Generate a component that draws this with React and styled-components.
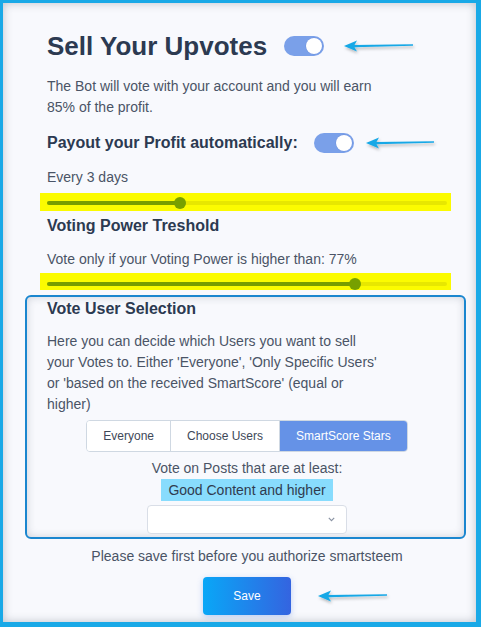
import React from "react";
import styled, { createGlobalStyle } from "styled-components";

const Global = createGlobalStyle`
  html, body { margin: 0; padding: 0; background: #ffffff; }
  body { font-family: "Liberation Sans", Arial, sans-serif; }
  * { box-sizing: border-box; }
`;

const Frame = styled.div`
  width: 481px;
  height: 627px;
  border-style: solid;
  border-color: #19a9e7;
  border-width: 3px 5px 5px 3px;
  background: #f8f9fd;
  box-shadow: inset 0 0 10px rgba(40, 50, 70, 0.28);
  padding: 28px 0 0 44px;
  overflow: hidden;
`;

const Column = styled.div`
  width: 400px;
  display: flex;
  flex-direction: column;
`;

const Row = styled.div`
  display: flex;
  align-items: center;
  height: ${(p) => p.$h}px;
  margin-top: ${(p) => p.$mt || 0}px;
`;

const Title = styled.h1`
  margin: 0;
  font-size: 26px;
  line-height: 30px;
  font-weight: 700;
  color: #2c3a51;
  white-space: nowrap;
`;

const Heading = styled.h2`
  margin: ${(p) => p.$mt || 0}px 0 0 0;
  font-size: 16px;
  line-height: 18px;
  font-weight: 700;
  color: #2c3a51;
  white-space: nowrap;
`;

const Text = styled.p`
  margin: ${(p) => p.$mt || 0}px 0 0 0;
  font-size: 14px;
  line-height: 21px;
  color: #4a5466;
  max-width: ${(p) => (p.$narrow ? "335px" : "none")};
  text-align: ${(p) => (p.$center ? "center" : "left")};
`;

const Toggle = styled.div`
  width: 40px;
  height: 20px;
  border-radius: 10px;
  background: #7aa0e9;
  margin-left: ${(p) => p.$ml}px;
  display: flex;
  align-items: center;
  justify-content: flex-end;
  padding-right: 2px;
  flex-shrink: 0;
`;

const Knob = styled.span`
  width: 16px;
  height: 16px;
  border-radius: 50%;
  background: #ffffff;
  box-shadow: 0 0 0 0.5px #6d90dd;
`;

const ArrowSvg = styled.svg`
  margin-left: ${(p) => p.$ml}px;
  flex-shrink: 0;
  overflow: visible;
`;

const Arrow = ({ ml, w = 70 }) => (
  <ArrowSvg $ml={ml} width={w} height="12" viewBox={`0 0 ${w} 12`}>
    <defs>
      <filter id="ash" x="-20%" y="-80%" width="140%" height="300%">
        <feDropShadow dx="1" dy="2" stdDeviation="1.5" floodColor="#000" floodOpacity="0.28" />
      </filter>
    </defs>
    <path
      d={`M0 6 L13 0.5 L10.5 5 L${w} 4.3 L${w} 5.8 L10.5 7.2 L13 11.5 Z`}
      fill="#18a8e6"
      filter="url(#ash)"
    />
  </ArrowSvg>
);

const Band = styled.div`
  margin: ${(p) => p.$mt}px 0 0 -7px;
  width: 411px;
  background: #fbfb00;
  padding: ${(p) => p.$pt}px 4px ${(p) => p.$pb}px 7px;
`;

const SliderTrack = styled.div`
  position: relative;
  width: 400px;
  height: 12px;
  display: flex;
  align-items: center;
`;

const Rail = styled.div`
  width: 100%;
  height: 4px;
  border-radius: 2px;
  background: #e7e700;
`;

const Fill = styled.div`
  height: 100%;
  border-radius: 2px;
  background: #789d00;
`;

const Thumb = styled.span`
  position: absolute;
  top: 0;
  width: 12px;
  height: 12px;
  margin-left: -6px;
  border-radius: 50%;
  background: #77a000;
`;

const Slider = ({ value }) => (
  <SliderTrack>
    <Rail>
      <Fill style={{ width: `${value}%` }} />
    </Rail>
    <Thumb style={{ left: `${value}%` }} />
  </SliderTrack>
);

const Box = styled.section`
  margin: 5px -19px 0 -22px;
  border: 2px solid #1a86cf;
  border-radius: 6px;
  padding: 3px 17px 3px 20px;
  box-shadow: inset 0 0 9px rgba(40, 50, 70, 0.2);
  display: flex;
  flex-direction: column;
`;

const Group = styled.div`
  margin-top: 5px;
  align-self: center;
  display: flex;
  height: 32px;
  border: 1px solid #cfd8e2;
  border-radius: 4px;
  overflow: hidden;
  background: #ffffff;
`;

const SegButton = styled.button`
  border: none;
  border-left: ${(p) => (p.$first ? "none" : "1px solid #cfd8e2")};
  padding: 0 16px;
  margin: 0;
  font-family: "Liberation Sans", Arial, sans-serif;
  font-size: 12px;
  color: ${(p) => (p.$active ? "#ffffff" : "#3e4858")};
  background: ${(p) => (p.$active ? "#6592e7" : "#ffffff")};
  white-space: nowrap;
  cursor: pointer;
`;

const Highlight = styled.span`
  align-self: center;
  display: inline-block;
  background: #88dcfd;
  color: #2f3b4f;
  font-size: 14px;
  line-height: 22px;
  padding: 0 7px;
`;

const Select = styled.div`
  align-self: center;
  margin-top: 4px;
  width: 200px;
  height: 29px;
  background: #ffffff;
  border: 1px solid #d9dee7;
  border-radius: 4px;
  display: flex;
  align-items: center;
  justify-content: flex-end;
  padding-right: 11px;
`;

const SaveButton = styled.button`
  width: 88px;
  height: 38px;
  border: none;
  border-radius: 4px;
  background: linear-gradient(90deg, #09a7f7 0%, #3464e0 100%);
  color: #ffffff;
  font-family: "Liberation Sans", Arial, sans-serif;
  font-size: 12px;
  box-shadow: 0 2px 6px rgba(60, 110, 220, 0.3);
  cursor: pointer;
  flex-shrink: 0;
`;

const SaveRow = styled.div`
  display: flex;
  align-items: center;
  margin-top: 10px;
  padding-left: 156px;
`;

export default function App() {
  return (
    <>
      <Global />
      <Frame>
        <Column>
          <Row $h={30}>
            <Title>Sell Your Upvotes</Title>
            <Toggle $ml={17}>
              <Knob />
            </Toggle>
            <Arrow ml={20} w={69} />
          </Row>
          <Text $mt={15} $narrow>
            The Bot will vote with your account and you will earn 85% of the profit.
          </Text>
          <Row $h={20} $mt={15}>
            <Heading>Payout your Profit automatically:</Heading>
            <Toggle $ml={16}>
              <Knob />
            </Toggle>
            <Arrow ml={12} w={68} />
          </Row>
          <Text $mt={14}>Every 3 days</Text>
          <Band $mt={5} $pt={4} $pb={2}>
            <Slider value={33.3} />
          </Band>
          <Heading $mt={6}>Voting Power Treshold</Heading>
          <Text $mt={14}>Vote only if your Voting Power is higher than: 77%</Text>
          <Band $mt={3} $pt={5} $pb={0}>
            <Slider value={77} />
          </Band>
          <Box>
            <Heading>Vote User Selection</Heading>
            <Text $mt={13} $narrow>
              Here you can decide which Users you want to sell your Votes to. Either 'Everyone', 'Only Specific Users' or 'based on the received SmartScore' (equal or higher)
            </Text>
            <Group>
              <SegButton $first>Everyone</SegButton>
              <SegButton>Choose Users</SegButton>
              <SegButton $active>SmartScore Stars</SegButton>
            </Group>
            <Text $mt={6} $center>Vote on Posts that are at least:</Text>
            <Highlight>Good Content and higher</Highlight>
            <Select>
              <svg width="7" height="5" viewBox="0 0 7 5">
                <path d="M0.8 0.8 L3.5 3.6 L6.2 0.8" fill="none" stroke="#8a93a3" strokeWidth="1.2" />
              </svg>
            </Select>
          </Box>
          <Text $mt={7} $center>Please save first before you authorize smartsteem</Text>
          <SaveRow>
            <SaveButton>Save</SaveButton>
            <Arrow ml={27} w={69} />
          </SaveRow>
        </Column>
      </Frame>
    </>
  );
}
